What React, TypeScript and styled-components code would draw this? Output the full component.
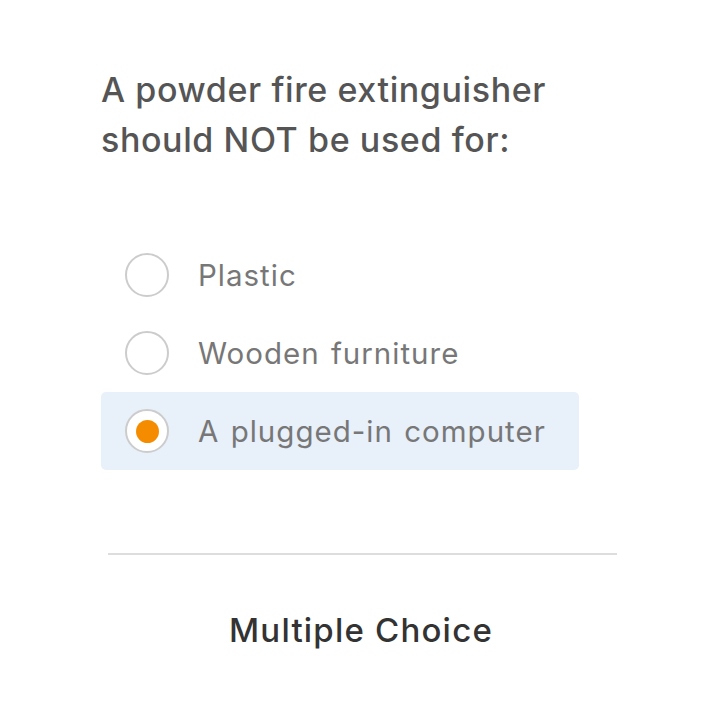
import React from "react";
import styled, { createGlobalStyle } from "styled-components";

const Global = createGlobalStyle`
  html, body { margin: 0; padding: 0; background: #ffffff; }
  body { font-family: "Inter", "Noto Sans", sans-serif; }
`;

const Page = styled.div`
  width: 721px;
  height: 720px;
  box-sizing: border-box;
  padding: 65px 0 0 101px;
  display: flex;
  flex-direction: column;
`;

const Question = styled.h1`
  margin: 0;
  font-size: 34px;
  line-height: 50px;
  font-weight: 500;
  letter-spacing: 0.6px;
  color: #555555;
  width: 520px;
`;

const Options = styled.div`
  margin-top: 71px;
  width: 478px;
  display: flex;
  flex-direction: column;
`;

const Row = styled.div<{ $selected?: boolean }>`
  height: 78px;
  display: flex;
  align-items: center;
  padding-left: 24px;
  gap: 29px;
  border-radius: 5px;
  background: ${(p) => (p.$selected ? "#e8f0fa" : "transparent")};
`;

const Radio = styled.span<{ $checked?: boolean }>`
  width: 44px;
  height: 44px;
  box-sizing: border-box;
  border-radius: 50%;
  border: 2px solid #cccccc;
  background: #ffffff;
  display: flex;
  align-items: center;
  justify-content: center;
  flex-shrink: 0;
  &::after {
    content: "";
    display: ${(p) => (p.$checked ? "block" : "none")};
    width: 23px;
    height: 23px;
    border-radius: 50%;
    background: #f58c00;
  }
`;

const Label = styled.span`
  font-size: 29.5px;
  letter-spacing: 1px;
  word-spacing: 2px;
  color: #777777;
`;

const Divider = styled.hr`
  margin: 83px 0 0 7px;
  width: 509px;
  border: none;
  height: 2px;
  background: #dddddd;
`;

const Footer = styled.div`
  margin-top: 55px;
  width: 520px;
  text-align: center;
  font-size: 33px;
  font-weight: 500;
  letter-spacing: 1.2px;
  color: #333333;
`;

const options = [
  { label: "Plastic", checked: false },
  { label: "Wooden furniture", checked: false },
  { label: "A plugged-in computer", checked: true },
];

export default function App() {
  return (
    <>
      <Global />
      <Page>
        <Question>
          A powder fire extinguisher
          <br />
          should NOT be used for:
        </Question>
        <Options>
          {options.map((o) => (
            <Row key={o.label} $selected={o.checked}>
              <Radio $checked={o.checked} />
              <Label>{o.label}</Label>
            </Row>
          ))}
        </Options>
        <Divider />
        <Footer>Multiple Choice</Footer>
      </Page>
    </>
  );
}
